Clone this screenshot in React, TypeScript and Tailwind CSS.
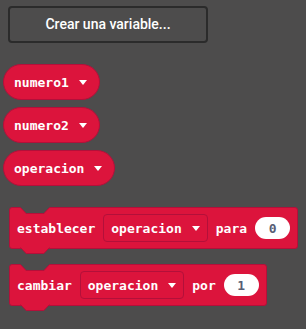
import React from "react";

const MONO = "font-['DejaVu_Sans_Mono',monospace] text-[13px] font-bold";

function Caret() {
  return (
    <svg width="8" height="5" viewBox="0 0 8 5" className="shrink-0">
      <path d="M0 0 L8 0 L4 5 Z" fill="#ffffff" />
    </svg>
  );
}

function VarPill({ name }: { name: string }) {
  return (
    <div className="flex items-center h-[36px] self-start rounded-full bg-[#dc143c] border border-[#b3103a] pl-[10px] pr-[12px] gap-[10px]">
      <span className={`${MONO} text-white leading-none`}>{name}</span>
      <Caret />
    </div>
  );
}

function Field({ label }: { label: string }) {
  return (
    <div className="flex items-center h-[28px] rounded-[4px] border border-[#b3103a] px-[7px] gap-[10px]">
      <span className={`${MONO} text-white leading-none`}>{label}</span>
      <Caret />
    </div>
  );
}

function NumInput({ value }: { value: string }) {
  return (
    <div className="flex items-center justify-center w-[35px] h-[22px] rounded-full bg-white">
      <span className={`${MONO} text-[#575e75] leading-none`}>{value}</span>
    </div>
  );
}

function Block({ children }: { children: React.ReactNode }) {
  return (
    <div className="relative self-start flex items-center gap-[8px] bg-[#dc143c] border border-[#b3103a] rounded-[3px] px-[7px] py-[6px]">
      {/* top notch */}
      <svg width="32" height="8" viewBox="0 0 32 8" className="absolute left-[10px] top-[-1px]">
        <path d="M0 0 L6 6.5 L24 6.5 L30 0 Z" fill="#4d4c4c" />
        <path d="M0.5 0.5 L6.2 6.5 L23.8 6.5 L29.5 0.5" fill="none" stroke="#b3103a" strokeWidth="1" />
      </svg>
      {/* bottom tab */}
      <svg width="32" height="8" viewBox="0 0 32 8" className="absolute left-[10px] bottom-[-7px]">
        <path d="M0 0 L6 6.5 L24 6.5 L30 0 Z" fill="#dc143c" />
        <path d="M0.5 0.5 L6.2 6.5 L23.8 6.5 L29.5 0.5" fill="none" stroke="#b3103a" strokeWidth="1" />
      </svg>
      {children}
    </div>
  );
}

export default function App() {
  return (
    <div className="w-[306px] h-[329px] bg-[#4d4c4c] flex flex-col overflow-hidden">
      <button className="ml-[8px] mt-[6px] w-[200px] h-[37px] rounded-[4px] border-2 border-[#2b2b2b] bg-[#4d4c4c] flex items-center justify-center">
        <span className="font-['Roboto',sans-serif] text-[14px] font-medium text-white">Crear una variable...</span>
      </button>

      <div className="ml-[3px] mt-[21px] flex flex-col gap-[7px]">
        <VarPill name="numero1" />
        <VarPill name="numero2" />
        <VarPill name="operacion" />
      </div>

      <div className="ml-[9px] mt-[21px] flex flex-col gap-[15px]">
        <Block>
          <span className={`${MONO} text-white leading-none`}>establecer</span>
          <Field label="operacion" />
          <span className={`${MONO} text-white leading-none`}>para</span>
          <NumInput value="0" />
        </Block>
        <Block>
          <span className={`${MONO} text-white leading-none`}>cambiar</span>
          <Field label="operacion" />
          <span className={`${MONO} text-white leading-none`}>por</span>
          <NumInput value="1" />
        </Block>
      </div>
    </div>
  );
}
